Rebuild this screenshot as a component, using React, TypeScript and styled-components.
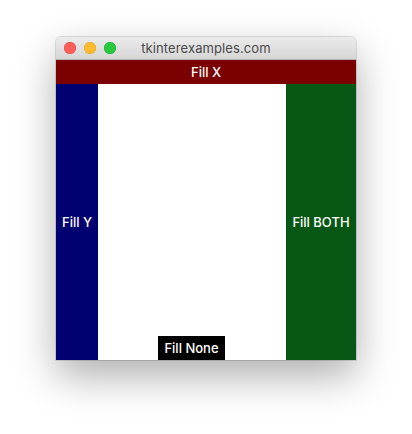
import React from "react";
import styled, { createGlobalStyle } from "styled-components";

const Global = createGlobalStyle`
  html, body { margin: 0; padding: 0; background: #ffffff; }
  body { font-family: Inter, "Liberation Sans", sans-serif; }
`;

const Page = styled.div`
  width: 412px;
  height: 434px;
  padding: 37px 0 0 56px;
  box-sizing: border-box;
`;

const Window = styled.div`
  width: 300px;
  height: 323px;
  display: flex;
  flex-direction: column;
  border-radius: 5px 5px 0 0;
  overflow: hidden;
  box-shadow: 0 16px 40px rgba(0, 0, 0, 0.32), 0 0 0 1px rgba(0, 0, 0, 0.12);
`;

const TitleBar = styled.div`
  height: 23px;
  flex: none;
  display: flex;
  align-items: center;
  position: relative;
  background: linear-gradient(#ebebeb, #d6d6d6);
  border-bottom: 1px solid #b4b4b4;
  box-sizing: border-box;
`;

const Lights = styled.div`
  display: flex;
  gap: 8px;
  padding-left: 8px;
`;

const Light = styled.span<{ $c: string; $b: string }>`
  width: 12px;
  height: 12px;
  border-radius: 50%;
  background: ${(p) => p.$c};
  box-shadow: inset 0 0 0 0.5px ${(p) => p.$b};
`;

const Title = styled.div`
  position: absolute;
  left: 0;
  right: 0;
  text-align: center;
  font-size: 13px;
  color: #4a4a4a;
  letter-spacing: 0.1px;
`;

const FillX = styled.div`
  height: 24px;
  flex: none;
  background: #7b0000;
  color: #fff;
  font-size: 13px;
  font-weight: 500;
  display: flex;
  align-items: center;
  justify-content: center;
`;

const Content = styled.div`
  flex: 1;
  display: flex;
`;

const Side = styled.div<{ $bg: string; $w: number }>`
  width: ${(p) => p.$w}px;
  flex: none;
  background: ${(p) => p.$bg};
  color: #fff;
  font-size: 13px;
  font-weight: 500;
  display: flex;
  align-items: center;
  justify-content: center;
`;

const Middle = styled.div`
  flex: 1;
  background: #fff;
  display: flex;
  align-items: flex-end;
  justify-content: center;
`;

const NoneLabel = styled.div`
  width: 67px;
  height: 24px;
  margin-right: 1px;
  background: #000;
  color: #fff;
  font-size: 13px;
  font-weight: 500;
  display: flex;
  align-items: center;
  justify-content: center;
`;

export default function App() {
  return (
    <Page>
      <Global />
      <Window>
        <TitleBar>
          <Lights>
            <Light $c="#fe5f57" $b="#e0443e" />
            <Light $c="#febc2e" $b="#dea123" />
            <Light $c="#28c840" $b="#1aab29" />
          </Lights>
          <Title>tkinterexamples.com</Title>
        </TitleBar>
        <FillX>Fill X</FillX>
        <Content>
          <Side $bg="#010070" $w={42}>Fill Y</Side>
          <Middle>
            <NoneLabel>Fill None</NoneLabel>
          </Middle>
          <Side $bg="#075714" $w={70}>Fill BOTH</Side>
        </Content>
      </Window>
    </Page>
  );
}
